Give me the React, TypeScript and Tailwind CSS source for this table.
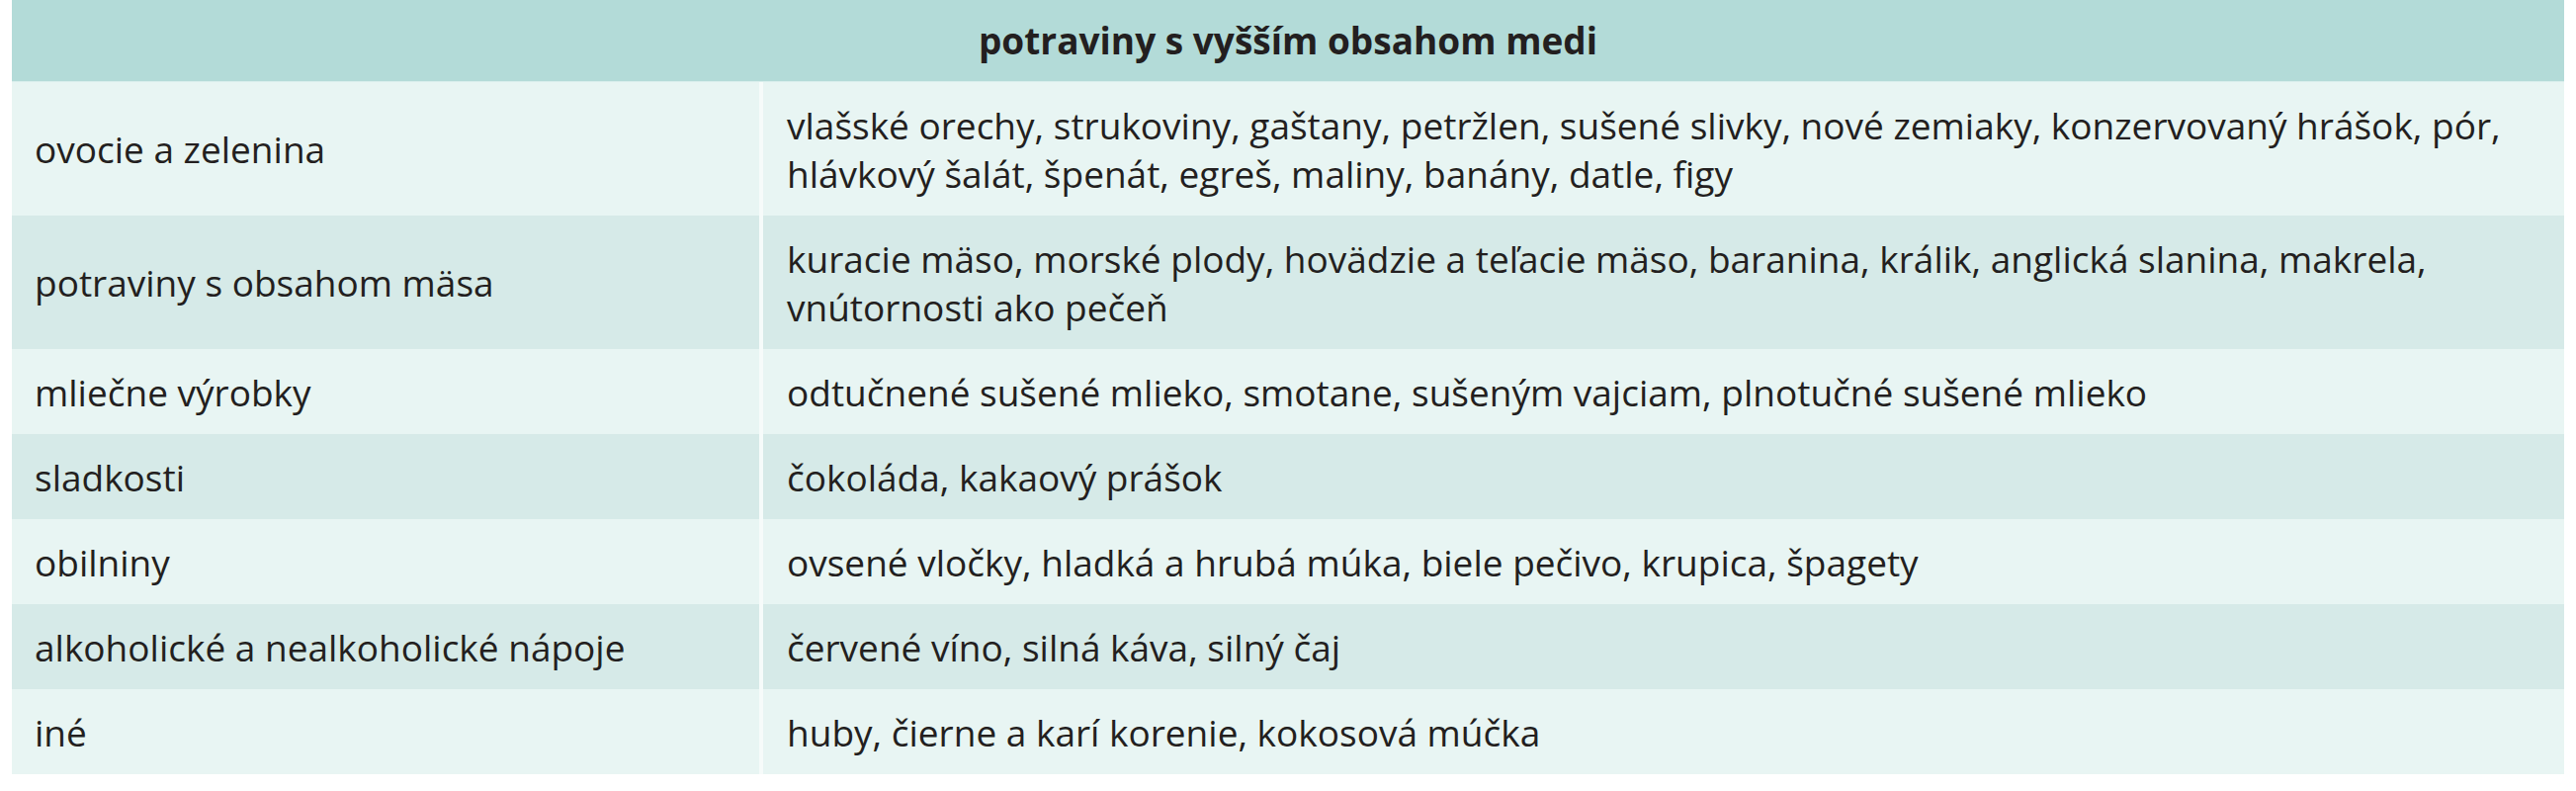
import React from "react";

const rows: { label: string; lines: string[] }[] = [
  {
    label: "ovocie a zelenina",
    lines: [
      "vlašské orechy, strukoviny, gaštany, petržlen, sušené slivky, nové zemiaky, konzervovaný hrášok, pór,",
      "hlávkový šalát, špenát, egreš, maliny, banány, datle, figy",
    ],
  },
  {
    label: "potraviny s obsahom mäsa",
    lines: [
      "kuracie mäso, morské plody, hovädzie a teľacie mäso, baranina, králik, anglická slanina, makrela,",
      "vnútornosti ako pečeň",
    ],
  },
  {
    label: "mliečne výrobky",
    lines: ["odtučnené sušené mlieko, smotane, sušeným vajciam, plnotučné sušené mlieko"],
  },
  { label: "sladkosti", lines: ["čokoláda, kakaový prášok"] },
  {
    label: "obilniny",
    lines: ["ovsené vločky, hladká a hrubá múka, biele pečivo, krupica, špagety"],
  },
  {
    label: "alkoholické a nealkoholické nápoje",
    lines: ["červené víno, silná káva, silný čaj"],
  },
  { label: "iné", lines: ["huby, čierne a karí korenie, kokosová múčka"] },
];

export default function App() {
  return (
    <div
      className="w-[2606px] h-[800px] bg-white text-[#231f20]"
      style={{ fontFamily: '"Open Sans", "Liberation Sans", sans-serif' }}
    >
      <div className="ml-[12px] w-[2582px]">
        <div className="h-[83px] bg-[#b3dbd8] flex items-center justify-center text-[37px] font-bold border-b border-[#d9eeec]">
          potraviny s vyšším obsahom medi
        </div>
        {rows.map((r, i) => (
          <div
            key={r.label}
            className={
              "flex text-[37px] leading-[49px] " +
              (i % 2 === 0 ? "bg-[#e8f5f3]" : "bg-[#d6eae8]")
            }
          >
            <div className="w-[756px] shrink-0 pl-[23px] flex items-center whitespace-nowrap">
              {r.label}
            </div>
            <div className="flex-1 border-l-4 border-[#f6fbfa] pl-[24px] pt-[19px] pb-[18px] whitespace-nowrap">
              {r.lines.map((l) => (
                <div key={l}>{l}</div>
              ))}
            </div>
          </div>
        ))}
      </div>
    </div>
  );
}
